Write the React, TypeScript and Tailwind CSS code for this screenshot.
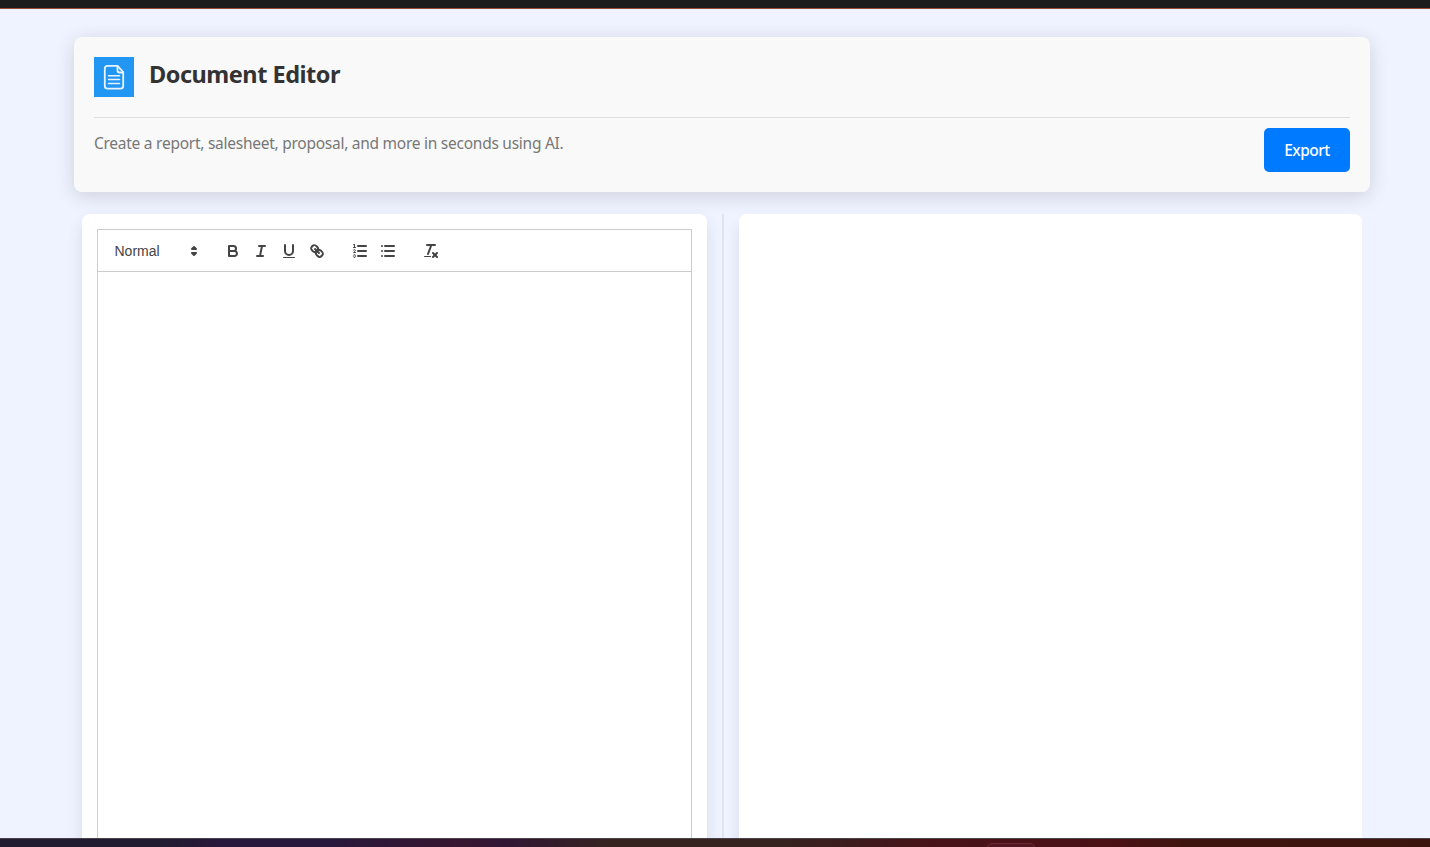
import React from "react";

const Icon = ({ children }: { children: React.ReactNode }) => (
  <span className="flex h-6 w-7 items-center justify-center">
    <svg viewBox="0 0 18 18" className="h-[18px] w-[18px]" fill="none" stroke="#444" strokeWidth="2" strokeLinecap="round" strokeLinejoin="round">
      {children}
    </svg>
  </span>
);

const Toolbar = () => (
  <div className="flex h-[43px] items-center gap-[15px] border border-[#ccc] px-2">
    <div className="flex h-6 w-[98px] items-center justify-between pl-2 font-['Liberation_Sans',Arial,sans-serif] text-[14px] font-medium text-[#444]">
      <span className="pt-0.5 pl-[0.5px]">Normal</span>
      <svg viewBox="0 0 18 18" className="mr-px h-[18px] w-[18px]" fill="none" stroke="#444" strokeWidth="2" strokeLinecap="round" strokeLinejoin="round">
        <polygon points="7 11 9 13 11 11 7 11" />
        <polygon points="7 7 9 5 11 7 7 7" />
      </svg>
    </div>
    <div className="flex">
      <Icon>
        <path d="M5,4H9.5A2.5,2.5,0,0,1,12,6.5v0A2.5,2.5,0,0,1,9.5,9H5V4Z" />
        <path d="M5,9h5.5A2.5,2.5,0,0,1,13,11.5v0A2.5,2.5,0,0,1,10.5,14H5V9Z" />
      </Icon>
      <Icon>
        <line x1="7" x2="13" y1="4" y2="4" />
        <line x1="5" x2="11" y1="14" y2="14" />
        <line x1="8" x2="10" y1="14" y2="4" />
      </Icon>
      <Icon>
        <path d="M5,3V9a4.012,4.012,0,0,0,4,4H9a4.012,4.012,0,0,0,4-4V3" />
        <rect fill="#444" stroke="none" height="1" rx="0.5" ry="0.5" width="12" x="3" y="15" />
      </Icon>
      <Icon>
        <line x1="7" x2="11" y1="7" y2="11" />
        <path d="M8.9,4.577a3.476,3.476,0,0,1,.36,4.679A3.476,3.476,0,0,1,4.577,8.9C3.185,7.5,2.035,6.4,4.217,4.217S7.5,3.185,8.9,4.577Z" />
        <path d="M13.423,9.1a3.476,3.476,0,0,0-4.679-.36,3.476,3.476,0,0,0,.36,4.679c1.392,1.392,2.5,2.542,4.679.36S14.815,10.5,13.423,9.1Z" />
      </Icon>
    </div>
    <div className="flex">
      <Icon>
        <line x1="7" x2="15" y1="4" y2="4" />
        <line x1="7" x2="15" y1="9" y2="9" />
        <line x1="7" x2="15" y1="14" y2="14" />
        <line strokeWidth="1" x1="2.5" x2="4.5" y1="5.5" y2="5.5" />
        <path fill="#444" stroke="none" d="M3.5,6A0.5,0.5,0,0,1,3,5.5V3.085l-0.276.138A0.5,0.5,0,0,1,2.053,3c-0.124-.247-0.023-0.324.224-0.447l1-.5A0.5,0.5,0,0,1,4,2.5v3A0.5,0.5,0,0,1,3.5,6Z" />
        <path strokeWidth="1" d="M4.5,10.5h-2c0-.234,1.85-1.076,1.85-2.234A0.959,0.959,0,0,0,2.5,8.156" />
        <path strokeWidth="1" d="M2.5,14.846a0.959,0.959,0,0,0,1.85-.109A0.7,0.7,0,0,0,3.75,14a0.688,0.688,0,0,0,.6-0.736,0.959,0.959,0,0,0-1.85-.109" />
      </Icon>
      <Icon>
        <line x1="6" x2="15" y1="4" y2="4" />
        <line x1="6" x2="15" y1="9" y2="9" />
        <line x1="6" x2="15" y1="14" y2="14" />
        <line x1="3" x2="3" y1="4" y2="4" />
        <line x1="3" x2="3" y1="9" y2="9" />
        <line x1="3" x2="3" y1="14" y2="14" />
      </Icon>
    </div>
    <div className="flex">
      <Icon>
        <line x1="5" x2="13" y1="3" y2="3" />
        <line x1="6" x2="9.35" y1="12" y2="3" />
        <line x1="11" x2="15" y1="11" y2="15" />
        <line x1="15" x2="11" y1="11" y2="15" />
        <rect fill="#444" stroke="none" height="1" rx="0.5" ry="0.5" width="7" x="2" y="14" />
      </Icon>
    </div>
  </div>
);

const Header = () => (
  <header className="mx-auto mt-7 flex h-[155px] w-[1296px] shrink-0 flex-col rounded-lg bg-[#f9f9f9] px-5 pt-5 shadow-[0_4px_20px_rgba(0,0,0,0.14)]">
    <div className="flex h-[61px] items-start gap-[15px] border-b border-[#e0e0e0]">
      <svg viewBox="0 0 40 40" className="h-10 w-10 shrink-0 bg-[#2196f3]" fill="none" stroke="#e9f4fe" strokeWidth="1.8" strokeLinejoin="round" strokeLinecap="round">
        <path d="M13.5 8.8H23.5L29.2 15V29Q29.2 31.7 26.5 31.7H13.5Q10.8 31.7 10.8 29V11.5Q10.8 8.8 13.5 8.8Z" />
        <path d="M23.5 9V13.5Q23.5 15.5 25.5 15.5H29" />
        <path strokeWidth="1.5" d="M14.5 18.7H25.5M14.5 22.6H25.5M14.5 26.5H25.5" />
      </svg>
      <h1 className="text-[23.5px] leading-[35px] font-bold tracking-[-0.48px] text-[#333]">Document Editor</h1>
    </div>
    <div className="flex items-start justify-between pt-[10px]">
      <p className="text-[15.5px] leading-[30px] tracking-[-0.26px] text-[#777]">Create a report, salesheet, proposal, and more in seconds using AI.</p>
      <button className="h-11 w-[86px] rounded-[5px] bg-[#007bff] pt-0.5 text-[15.5px] font-medium tracking-[-0.5px] text-white">Export</button>
    </div>
  </header>
);

export default function App() {
  return (
    <div className="flex h-[847px] w-[1430px] flex-col overflow-hidden bg-[#eff3ff] font-['Noto_Sans','Open_Sans',sans-serif]">
      <div className="h-[9px] shrink-0 border-b border-[#9c4a3c] bg-[#1c1c1c]" />
      <main className="flex min-h-0 flex-1 flex-col overflow-hidden pl-[14px]">
        <Header />
        <div className="mx-auto mt-[22px] flex min-h-0 w-[1280px] flex-1">
          <section className="flex h-[700px] w-[625px] flex-col rounded-lg bg-white p-[15px] shadow-[0_8px_16px_rgba(0,0,0,0.1)]">
            <Toolbar />
            <div className="flex-1 border-x border-[#ccc]" />
          </section>
          <div className="mx-[15px] h-[700px] w-0.5 bg-[#e0e4f0]" />
          <section className="h-[700px] w-[623px] rounded-lg bg-white shadow-[-8px_8px_12px_-4px_rgba(0,0,0,0.06)]" />
        </div>
      </main>
      <footer className="flex h-[9px] shrink-0 overflow-hidden border-t border-[#49424a] bg-[linear-gradient(90deg,#211c30_0px,#211c30_160px,#28183b_220px,#28183b_330px,#371630_460px,#321635_500px,#352320_610px,#352320_780px,#471319_930px,#4b1115_1110px,#401510_1180px,#3b150d_1430px)] pt-1">
        <div className="ml-[986px] h-3 w-[50px] rounded-t-md border border-[#6b2934] bg-[#521821]" />
      </footer>
    </div>
  );
}
